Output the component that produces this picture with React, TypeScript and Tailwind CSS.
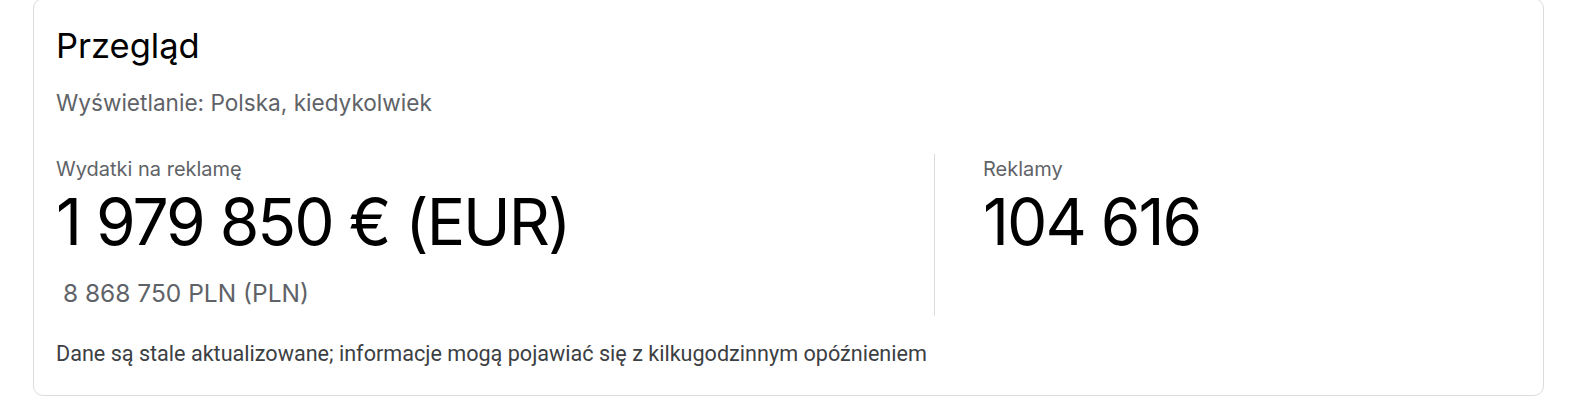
import React from 'react';

const HEAD = { fontFamily: 'Inter, "Open Sans", sans-serif' };
const BODY = { fontFamily: 'Roboto, "Liberation Sans", sans-serif' };

function Metric({ label, value, sub, divider }: { label: string; value: string; sub?: string; divider?: boolean }) {
  return (
    <div className={divider ? 'border-l border-[#dadce0] pl-[48px]' : ''}>
      <div className="mt-[5px] text-[20px] leading-none text-[#5f6368]">{label}</div>
      <div className="mt-[11px] text-[64px] leading-none tracking-[-2px] text-black">{value}</div>
      {sub && <div className="mt-[27px] pb-[10px] text-[24.5px] leading-none text-[#5f6368]">{sub}</div>}
    </div>
  );
}

export default function App() {
  return (
    <div className="min-h-screen bg-white">
      <div className="-mt-[2px] ml-[33px] h-[398px] w-[1511px] rounded-[10px] border border-[#dadce0] bg-white pl-[22px] pr-[24px] pt-[30px]">
        <div style={HEAD}>
          <h2 className="text-[34.5px] leading-none text-black">Przegląd</h2>
          <div className="mt-[28px] text-[22.6px] leading-none text-[#5f6368]">Wyświetlanie: Polska, kiedykolwiek</div>

          {/* Summary metrics */}
          <div className="mt-[40px] grid grid-cols-[878px_1fr]">
            <Metric label="Wydatki na reklamę" value="1 979 850 € (EUR)" sub={'\u00a08 868 750 PLN (PLN)'} />
            <Metric label="Reklamy" value="104 616" divider />
          </div>
        </div>

        <p style={BODY} className="mt-[27px] text-[21.6px] leading-none text-[#3c4043]">
          Dane są stale aktualizowane; informacje mogą pojawiać się z kilkugodzinnym opóźnieniem
        </p>
      </div>
    </div>
  );
}
